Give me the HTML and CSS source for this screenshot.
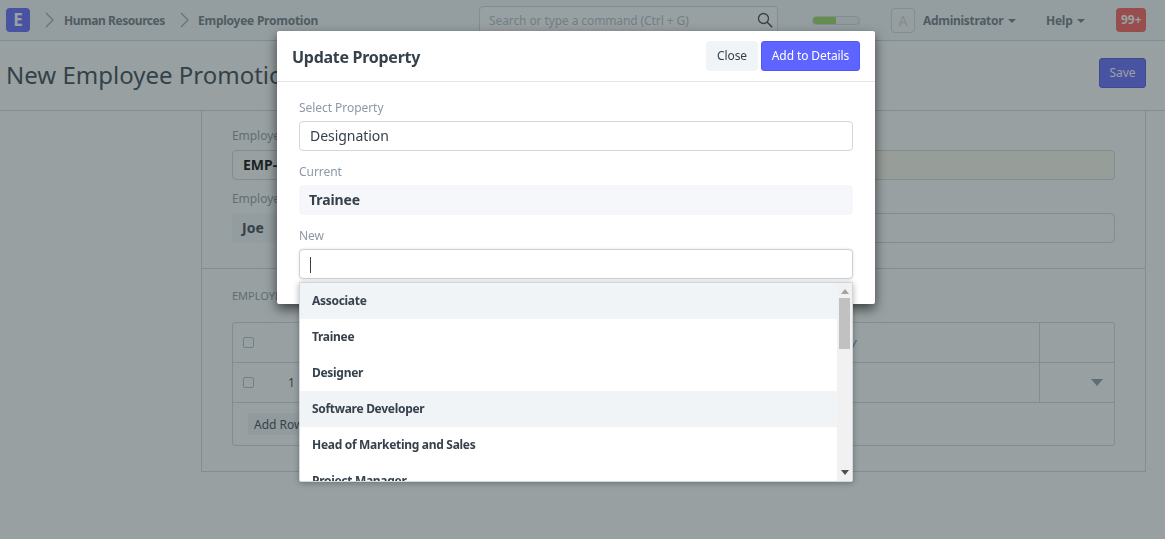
FILE: index.html
```html
<!DOCTYPE html>
<html lang="en">
<head>
    <meta charset="UTF-8">
    <meta name="viewport" content="width=device-width, initial-scale=1.0">
    <title>New Employee Promotion</title>
    <link rel="stylesheet" href="styles.css">
</head>
<body>

<header class="navbar">
    <div class="logo">E</div>
    <svg class="crumb-arrow" width="9" height="16" viewBox="0 0 9 16"><path d="M1 1l7 7-7 7" fill="none" stroke="#9aa3ab" stroke-width="1.2"/></svg>
    <a class="crumb crumb-first">Human Resources</a>
    <svg class="crumb-arrow" width="9" height="16" viewBox="0 0 9 16"><path d="M1 1l7 7-7 7" fill="none" stroke="#9aa3ab" stroke-width="1.2"/></svg>
    <a class="crumb crumb-last">Employee Promotion</a>
    <div class="search">
        <span>Search or type a command (Ctrl + G)</span>
        <svg width="16" height="16" viewBox="0 0 16 16"><circle cx="6.5" cy="6.5" r="5" fill="none" stroke="#36414c" stroke-width="1.3"/><path d="M10.2 10.2l5 5" stroke="#36414c" stroke-width="1.5"/></svg>
    </div>
    <div class="progress"><div class="progress-fill"></div></div>
    <div class="avatar">A</div>
    <a class="nav-link nav-user">Administrator <span class="caret"></span></a>
    <a class="nav-link nav-help">Help <span class="caret"></span></a>
    <div class="badge">99+</div>
</header>

<div class="page-head">
    <h1>New Employee Promotion</h1>
    <button class="btn-save">Save</button>
</div>

<div class="form">
    <div class="form-top">
        <div class="field-row">
            <div class="field">
                <label>Employee</label>
                <div class="input input-bold">EMP-00001</div>
            </div>
            <div class="field">
                <label>Promotion Date</label>
                <div class="input input-required"></div>
            </div>
        </div>
        <div class="field-row">
            <div class="field">
                <label>Employee Name</label>
                <div class="static-value">Joe</div>
            </div>
            <div class="field">
                <label>Company</label>
                <div class="input"></div>
            </div>
        </div>
    </div>
    <div class="form-bottom">
        <div class="section-label">EMPLOYEE PROMOTION DETAILS</div>
        <div class="grid">
            <div class="grid-row">
                <div class="cell cell-check"><span class="check"></span></div>
                <div class="cell cell-main cell-head"><span>Property</span></div>
                <div class="cell cell-action"></div>
            </div>
            <div class="grid-row">
                <div class="cell cell-check"><span class="check"></span><span class="row-no">1</span></div>
                <div class="cell cell-main"></div>
                <div class="cell cell-action"><span class="row-caret"></span></div>
            </div>
            <div class="grid-foot"><button class="btn-add">Add Row</button></div>
        </div>
    </div>
</div>

<div class="backdrop"></div>

<div class="modal-layer">
    <div class="modal">
        <div class="modal-head">
            <h4>Update Property</h4>
            <button class="btn-close">Close</button>
            <button class="btn-primary">Add to Details</button>
        </div>
        <div class="modal-body">
            <label>Select Property</label>
            <div class="input modal-input">Designation</div>
            <label>Current</label>
            <div class="current-value">Trainee</div>
            <label>New</label>
            <div class="new-wrap">
                <div class="input modal-input input-focus"><span class="cursor"></span></div>
                <div class="dropdown">
                    <ul class="options">
                        <li class="active">Associate</li>
                        <li>Trainee</li>
                        <li>Designer</li>
                        <li class="active">Software Developer</li>
                        <li>Head of Marketing and Sales</li>
                        <li>Project Manager</li>
                    </ul>
                    <div class="scrollbar">
                        <span class="arrow-up"></span>
                        <div class="thumb"></div>
                        <span class="arrow-down"></span>
                    </div>
                </div>
            </div>
        </div>
    </div>
</div>

</body>
</html>
```

FILE: styles.css
```css
* {
    box-sizing: border-box;
}
html, body {
    height: 100%;
}
body {
    font-family: "Noto Sans", sans-serif;
    margin: 0;
    padding: 0;
    background-color: #fff;
    color: #36414c;
    overflow: hidden;
    font-size: 13px;
}
label {
    display: block;
    font-size: 12px;
    line-height: 16px;
    letter-spacing: -0.05px;
    color: #8d99a6;
}

/* navbar */
.navbar {
    display: flex;
    align-items: center;
    height: 41px;
    padding-left: 6px;
    border-bottom: 1px solid #d1d8dd;
    background-color: #f7fafc;
}
.logo {
    width: 24px;
    height: 24px;
    border-radius: 4px;
    background-color: #5e64ff;
    color: #fff;
    font-weight: 700;
    font-size: 17px;
    line-height: 24px;
    text-align: center;
}
.crumb-arrow {
    margin-left: 15px;
}
.crumb {
    font-weight: 700;
    font-size: 12px;
    color: #6c7680;
}
.crumb-first {
    width: 101px;
    margin-left: 10px;
    letter-spacing: -0.45px;
    white-space: nowrap;
}
.crumb-last {
    width: 120px;
    margin-left: 9px;
    letter-spacing: -0.25px;
    white-space: nowrap;
}
.search {
    display: flex;
    align-items: center;
    justify-content: space-between;
    width: 299px;
    height: 29px;
    margin-left: 161px;
    padding: 0 4px 0 9px;
    border: 1px solid #d1d8dd;
    border-radius: 4px;
    background-color: #fff;
    font-size: 12px;
    letter-spacing: -0.1px;
    color: #b1bdca;
}
.progress {
    width: 48px;
    height: 9px;
    margin-left: 34px;
    border: 1px solid #d1d8dd;
    border-radius: 5px;
    background-color: #f0f4f7;
    overflow: hidden;
}
.progress-fill {
    width: 50%;
    height: 100%;
    background-color: #98d85b;
}
.avatar {
    width: 24px;
    height: 25px;
    margin-left: 31px;
    border: 1px solid #d1d8dd;
    border-radius: 4px;
    background-color: #fafbfc;
    color: #d1d8dd;
    font-size: 14px;
    line-height: 23px;
    text-align: center;
}
.nav-link {
    font-weight: 700;
    font-size: 12px;
    letter-spacing: -0.3px;
    color: #6c7680;
}
.nav-user {
    margin-left: 8px;
}
.nav-help {
    margin-left: 30px;
}
.caret {
    display: inline-block;
    margin-left: 2px;
    vertical-align: 2px;
    border-top: 4px solid #6c7680;
    border-left: 4px solid transparent;
    border-right: 4px solid transparent;
}
.badge {
    width: 30px;
    height: 24px;
    margin-left: 31px;
    border-radius: 4px;
    background-color: #ff5858;
    color: #fff;
    font-weight: 700;
    font-size: 12px;
    line-height: 24px;
    text-align: center;
}

/* page head */
.page-head {
    display: flex;
    align-items: center;
    justify-content: space-between;
    height: 70px;
    padding: 0 19px 5px 6px;
    border-bottom: 1px solid #d1d8dd;
}
.page-head h1 {
    margin: 0;
    padding-top: 2px;
    font-size: 24px;
    font-weight: 400;
    white-space: nowrap;
}
.btn-save {
    width: 47px;
    height: 30px;
    padding: 0 0 1px;
    border: 1px solid #4f55d9;
    border-radius: 3px;
    background-color: #5e64ff;
    color: #fff;
    font-family: inherit;
    font-size: 12px;
}

/* form behind the dialog */
.form {
    width: 945px;
    height: 361px;
    margin-left: 201px;
    border: 1px solid #d1d8dd;
    border-top: none;
}
.form-top {
    height: 158px;
    padding: 17px 30px 0;
    border-bottom: 1px solid #d1d8dd;
}
.field-row {
    display: flex;
    gap: 30px;
    margin-bottom: 11px;
}
.field {
    flex: 1;
}
.field label {
    margin-bottom: 6px;
}
.input {
    height: 30px;
    padding: 0 10px;
    border: 1px solid #d1d8dd;
    border-radius: 4px;
    background-color: #fff;
    line-height: 28px;
}
.input-bold {
    font-weight: 700;
    font-size: 14px;
    color: #000;
}
.input-required {
    background-color: #fcf9ef;
}
.static-value {
    height: 30px;
    padding: 0 10px;
    border-radius: 4px;
    background-color: #f5f7fa;
    font-weight: 700;
    font-size: 14px;
    line-height: 30px;
}
.form-bottom {
    padding: 19px 30px 0;
}
.section-label {
    font-size: 11px;
    line-height: 16px;
    color: #8d99a6;
    margin-bottom: 18px;
}
.grid {
    border: 1px solid #d1d8dd;
    border-radius: 3px;
}
.grid-row {
    display: flex;
    height: 40px;
    border-bottom: 1px solid #d1d8dd;
}
.cell {
    display: flex;
    align-items: center;
}
.cell-check {
    width: 70px;
    padding-left: 10px;
}
.cell-main {
    flex: 1;
    font-size: 12px;
    color: #6c7680;
}
.cell-head {
    padding-left: 508px;
    font-style: italic;
    color: #5e7fb5;
}
.cell-action {
    justify-content: flex-end;
    width: 75px;
    padding-right: 11px;
    border-left: 1px solid #d1d8dd;
}
.check {
    width: 11px;
    height: 11px;
    border: 1px solid #b1bdca;
    border-radius: 2px;
    background-color: #fff;
}
.row-no {
    margin-left: 34px;
    font-size: 12px;
}
.row-caret {
    border-top: 7px solid #8d99a6;
    border-left: 6px solid transparent;
    border-right: 6px solid transparent;
}
.grid-foot {
    height: 42px;
    padding: 10px 15px;
}
.btn-add {
    height: 22px;
    padding: 0 6px;
    border: none;
    border-radius: 3px;
    background-color: #f0f4f7;
    color: #36414c;
    font-family: inherit;
    font-size: 12px;
}

/* dialog */
.backdrop {
    position: fixed;
    inset: 0;
    background-color: rgba(50, 65, 67, 0.5);
}
.modal-layer {
    position: fixed;
    inset: 0;
    padding: 31px 0 0 277px;
}
.modal {
    width: 598px;
    height: 273px;
    border-radius: 2px;
    background-color: #fff;
    box-shadow: 0 5px 12px rgba(0, 0, 0, 0.6);
}
.modal-head {
    display: flex;
    align-items: center;
    gap: 3px;
    height: 51px;
    padding: 0 15px;
    border-bottom: 1px solid #e5e5e5;
}
.modal-head h4 {
    flex: 1;
    margin: 0;
    padding-top: 2px;
    font-size: 16px;
    font-weight: 700;
    letter-spacing: -0.28px;
}
.btn-close, .btn-primary {
    height: 30px;
    padding: 0 0 1px;
    border-radius: 3px;
    font-family: inherit;
    font-size: 12px;
    letter-spacing: -0.1px;
}
.btn-close {
    width: 52px;
    border: 1px solid #f0f4f7;
    background-color: #f0f4f7;
    color: #36414c;
}
.btn-primary {
    width: 99px;
    border: 1px solid #4f55ff;
    background-color: #5e64ff;
    color: #fff;
}
.modal-body {
    padding: 18px 22px 0;
}
.modal-body label {
    margin-bottom: 5px;
}
.modal-input {
    font-size: 14px;
    letter-spacing: -0.05px;
    color: #36414c;
}
.modal-input + label, .current-value + label {
    margin-top: 13px;
}
.current-value {
    height: 30px;
    padding-left: 10px;
    border-radius: 4px;
    background-color: #f5f7fa;
    font-weight: 700;
    font-size: 14px;
    letter-spacing: -0.1px;
    line-height: 30px;
}
.new-wrap {
    position: relative;
}
.input-focus {
    border-color: #c9d3da;
    box-shadow: 0 0 3px rgba(0, 0, 0, 0.12);
}
.cursor {
    display: inline-block;
    width: 1px;
    height: 16px;
    vertical-align: middle;
    background-color: #36414c;
}
.dropdown {
    position: absolute;
    top: 33px;
    left: 0;
    right: 0;
    display: flex;
    height: 200px;
    border: 1px solid #d1d8dd;
    border-radius: 2px;
    background-color: #fff;
    box-shadow: 0 1px 6px rgba(0, 0, 0, 0.3);
    overflow: hidden;
}
.options {
    flex: 1;
    margin: 0;
    padding: 0;
    list-style: none;
    overflow: hidden;
}
.options li {
    height: 36px;
    padding-left: 12px;
    font-weight: 700;
    font-size: 12px;
    letter-spacing: -0.3px;
    line-height: 36px;
}
.options li.active {
    background-color: #f0f4f7;
}
.scrollbar {
    display: flex;
    flex-direction: column;
    align-items: center;
    width: 15px;
    background-color: #f1f1f1;
}
.arrow-up {
    margin-top: 6px;
    border-bottom: 5px solid #a3a3a3;
    border-left: 4px solid transparent;
    border-right: 4px solid transparent;
}
.thumb {
    width: 11px;
    height: 51px;
    margin-top: 4px;
    background-color: #c1c1c1;
}
.arrow-down {
    margin-top: auto;
    margin-bottom: 6px;
    border-top: 5px solid #505050;
    border-left: 4px solid transparent;
    border-right: 4px solid transparent;
}
```
